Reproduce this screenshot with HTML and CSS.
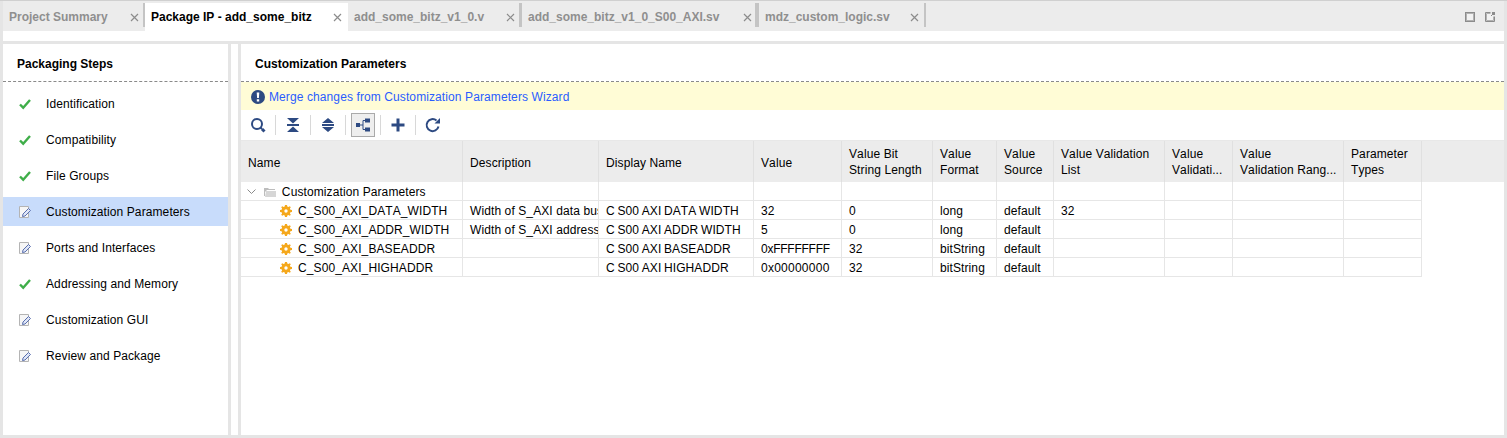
FILE: index.html
```html
<!DOCTYPE html>
<html lang="en">
<head>
  <meta charset="UTF-8">
  <title>Package IP - add_some_bitz</title>
  <link rel="stylesheet" href="styles.css">
</head>
<body>
  <!-- Tab bar -->
  <div class="tabbar">
    <div class="tab tab-first"><span class="tab-label">Project Summary</span><svg class="tab-x" viewBox="0 0 9 9"><path d="M1 1l7 7M8 1l-7 7"/></svg></div>
    <div class="tab tab-active"><span class="tab-label">Package IP - add_some_bitz</span><svg class="tab-x" viewBox="0 0 9 9"><path d="M1 1l7 7M8 1l-7 7"/></svg></div>
    <div class="tab tab-v"><span class="tab-label">add_some_bitz_v1_0.v</span><svg class="tab-x" viewBox="0 0 9 9"><path d="M1 1l7 7M8 1l-7 7"/></svg></div>
    <div class="tab tab-axi"><span class="tab-label">add_some_bitz_v1_0_S00_AXI.sv</span><svg class="tab-x" viewBox="0 0 9 9"><path d="M1 1l7 7M8 1l-7 7"/></svg></div>
    <div class="tab tab-mdz"><span class="tab-label">mdz_custom_logic.sv</span><svg class="tab-x" viewBox="0 0 9 9"><path d="M1 1l7 7M8 1l-7 7"/></svg></div>
    <div class="tab-tools">
      <svg class="win-icon" viewBox="0 0 10 10"><rect x="1.500" y="1.500" width="7" height="7" class="win-inner"/><rect x="0.500" y="0.500" width="9" height="9" class="win-outer"/></svg>
      <svg class="win-icon" viewBox="0 0 10 10"><path d="M5.500 1.500h-4v7h7V4.500" class="win-inner"/><path d="M5.500 .5h-5v9h9v-5" class="win-outer"/><path d="M7 0h3v3H7zM6 3h1v1H6z" class="win-arrow"/></svg>
    </div>
  </div>
  <div class="strip"></div>

  <div class="main">
    <!-- Packaging steps -->
    <div class="side">
      <div class="panel-title">Packaging Steps</div>
      <ul class="steps">
        <li class="step"><svg class="step-icon" viewBox="0 0 12 12"><path class="check" d="M1 6.500l3.200 3.200L11 2"/></svg>Identification</li>
        <li class="step"><svg class="step-icon" viewBox="0 0 12 12"><path class="check" d="M1 6.500l3.200 3.200L11 2"/></svg>Compatibility</li>
        <li class="step"><svg class="step-icon" viewBox="0 0 12 12"><path class="check" d="M1 6.500l3.200 3.200L11 2"/></svg>File Groups</li>
        <li class="step step-selected"><svg class="step-icon" viewBox="0 0 12 12"><path class="sheet" d="M.5 .5h9v11h-9z"/><path class="pen" d="M3.500 10.500l.5-2.500L9.500 2.500l2 2L6 10z"/></svg>Customization Parameters</li>
        <li class="step"><svg class="step-icon" viewBox="0 0 12 12"><path class="sheet" d="M.5 .5h9v11h-9z"/><path class="pen" d="M3.500 10.500l.5-2.500L9.500 2.500l2 2L6 10z"/></svg>Ports and Interfaces</li>
        <li class="step"><svg class="step-icon" viewBox="0 0 12 12"><path class="check" d="M1 6.500l3.200 3.200L11 2"/></svg>Addressing and Memory</li>
        <li class="step"><svg class="step-icon" viewBox="0 0 12 12"><path class="sheet" d="M.5 .5h9v11h-9z"/><path class="pen" d="M3.500 10.500l.5-2.500L9.500 2.500l2 2L6 10z"/></svg>Customization GUI</li>
        <li class="step"><svg class="step-icon" viewBox="0 0 12 12"><path class="sheet" d="M.5 .5h9v11h-9z"/><path class="pen" d="M3.500 10.500l.5-2.500L9.500 2.500l2 2L6 10z"/></svg>Review and Package</li>
      </ul>
    </div>
    <div class="splitter"></div>

    <!-- Parameters -->
    <div class="content">
      <div class="panel-title">Customization Parameters</div>
      <div class="notice">
        <svg class="notice-icon" viewBox="0 0 14 14"><circle cx="7" cy="7" r="7"/><path d="M5.700 2.500h2.600l-.4 5.500H6.100zM5.800 9.200h2.400v2.300H5.800z"/></svg>
        <a class="notice-link">Merge changes from Customization Parameters Wizard</a>
      </div>
      <div class="toolbar">
        <span class="tool"><svg viewBox="0 0 16 16"><circle class="tool-line" cx="7" cy="7" r="5"/><path class="tool-line" d="M10.500 10.500l1.500 1.500"/><path class="tool-plus" d="M12 12l2.500 2.500"/></svg></span>
        <i class="tool-sep"></i>
        <span class="tool"><svg viewBox="0 0 16 16"><path class="tool-fill" d="M2 1h12L8 6.500zM2 7h12v2H2zM2 15h12L8 9.500z"/></svg></span>
        <i class="tool-sep"></i>
        <span class="tool"><svg viewBox="0 0 16 16"><path class="tool-fill" d="M8 1l6 5H2zM2 7h12v2H2zM8 15l6-5H2z"/></svg></span>
        <i class="tool-sep"></i>
        <span class="tool tool-on"><svg viewBox="0 0 16 16"><path class="tool-thin" d="M5 8h3M8 3.500v9M8 3.500h3M8 12.500h3"/><rect class="tool-fill" x="1" y="6" width="4" height="4"/><rect class="tool-fill" x="10" y="1.500" width="5" height="4"/><rect class="tool-fill" x="10" y="10.500" width="5" height="4"/></svg></span>
        <i class="tool-sep"></i>
        <span class="tool"><svg viewBox="0 0 16 16"><path class="tool-plus" d="M8 1.500v13M1.500 8h13"/></svg></span>
        <i class="tool-sep"></i>
        <span class="tool"><svg viewBox="0 0 16 16"><path class="tool-line" d="M13.500 9.500A6 6 0 1 1 11.500 3.500"/><path class="tool-fill" d="M9.500 6.500h5.500V1z"/></svg></span>
      </div>

      <table class="params">
        <colgroup>
          <col class="c-name"><col class="c-desc"><col class="c-display"><col class="c-value"><col class="c-bits">
          <col class="c-format"><col class="c-source"><col class="c-list"><col class="c-valid"><col class="c-range"><col class="c-types"><col>
        </colgroup>
        <thead>
          <tr>
            <th class="th-one">Name</th><th class="th-one">Description</th><th class="th-one">Display Name</th><th class="th-one">Value</th><th>Value Bit<br>String Length</th>
            <th>Value<br>Format</th><th>Value<br>Source</th><th>Value Validation<br>List</th><th>Value<br>Validati...</th>
            <th>Value<br>Validation Rang...</th><th>Parameter<br>Types</th><th class="filler"></th>
          </tr>
        </thead>
        <tbody>
          <tr>
            <td class="group">
              <svg class="chev" viewBox="0 0 9 6"><path d="M.5 .5l4 4 4-4"/></svg>
              <svg class="folder" viewBox="0 0 12 10"><path d="M0 1h4l1 1h6v1H3L1 5v4H0z" class="folder-back"/><path d="M2 4h10v6H1z" class="folder-front"/></svg>
              Customization Parameters
            </td>
            <td></td><td></td><td></td><td></td><td></td><td></td><td></td><td></td><td></td><td></td><td class="filler"></td>
          </tr>
          <tr>
            <td class="param"><svg class="gear" viewBox="0 0 12 12"><path d="M5 0h2l.3 1.600 1.100.5L9.800 1.200l1 1-.9 1.400.5 1.100L12 5v2l-1.600.3-.5 1.100.9 1.400-1 1-1.400-.9-1.100.5L7 12H5l-.3-1.600-1.100-.5-1.400.9-1-1 .9-1.400-.5-1.100L0 7V5l1.600-.3.5-1.100-.9-1.400 1-1 1.400.9 1.100-.5zM6 4.300a1.700 1.700 0 1 0 0 3.400 1.700 1.700 0 0 0 0-3.400z"/></svg>C_S00_AXI_DATA_WIDTH</td>
            <td>Width of S_AXI data bus</td><td class="display">C S00 AXI DATA WIDTH</td><td>32</td><td>0</td><td>long</td><td>default</td><td>32</td><td></td><td></td><td></td><td class="filler"></td>
          </tr>
          <tr>
            <td class="param"><svg class="gear" viewBox="0 0 12 12"><path d="M5 0h2l.3 1.600 1.100.5L9.800 1.200l1 1-.9 1.400.5 1.100L12 5v2l-1.600.3-.5 1.100.9 1.400-1 1-1.400-.9-1.100.5L7 12H5l-.3-1.600-1.100-.5-1.400.9-1-1 .9-1.400-.5-1.100L0 7V5l1.600-.3.5-1.100-.9-1.400 1-1 1.400.9 1.100-.5zM6 4.300a1.700 1.700 0 1 0 0 3.400 1.700 1.700 0 0 0 0-3.400z"/></svg>C_S00_AXI_ADDR_WIDTH</td>
            <td>Width of S_AXI address bus</td><td class="display">C S00 AXI ADDR WIDTH</td><td>5</td><td>0</td><td>long</td><td>default</td><td></td><td></td><td></td><td></td><td class="filler"></td>
          </tr>
          <tr>
            <td class="param"><svg class="gear" viewBox="0 0 12 12"><path d="M5 0h2l.3 1.600 1.100.5L9.800 1.200l1 1-.9 1.400.5 1.100L12 5v2l-1.600.3-.5 1.100.9 1.400-1 1-1.400-.9-1.100.5L7 12H5l-.3-1.600-1.100-.5-1.400.9-1-1 .9-1.400-.5-1.100L0 7V5l1.600-.3.5-1.100-.9-1.400 1-1 1.400.9 1.100-.5zM6 4.300a1.700 1.700 0 1 0 0 3.400 1.700 1.700 0 0 0 0-3.400z"/></svg>C_S00_AXI_BASEADDR</td>
            <td></td><td class="display">C S00 AXI BASEADDR</td><td class="hex-f">0xFFFFFFFF</td><td>32</td><td>bitString</td><td>default</td><td></td><td></td><td></td><td></td><td class="filler"></td>
          </tr>
          <tr>
            <td class="param"><svg class="gear" viewBox="0 0 12 12"><path d="M5 0h2l.3 1.600 1.100.5L9.800 1.200l1 1-.9 1.400.5 1.100L12 5v2l-1.600.3-.5 1.100.9 1.400-1 1-1.400-.9-1.100.5L7 12H5l-.3-1.600-1.100-.5-1.400.9-1-1 .9-1.400-.5-1.100L0 7V5l1.600-.3.5-1.100-.9-1.400 1-1 1.400.9 1.100-.5zM6 4.300a1.700 1.700 0 1 0 0 3.400 1.700 1.700 0 0 0 0-3.400z"/></svg>C_S00_AXI_HIGHADDR</td>
            <td></td><td class="display">C S00 AXI HIGHADDR</td><td class="hex-0">0x00000000</td><td>32</td><td>bitString</td><td>default</td><td></td><td></td><td></td><td></td><td class="filler"></td>
          </tr>
        </tbody>
      </table>
    </div>
  </div>
</body>
</html>
```

FILE: styles.css
```css
html, body {
  margin: 0;
  height: 100%;
}
body {
  display: flex;
  flex-direction: column;
  height: 438px;
  overflow: hidden;
  font-family: "Liberation Sans", Arial, sans-serif;
  font-size: 12px;
  font-kerning: none;
  letter-spacing: 0.1px;
  color: #000;
  background: #e5e5e5;
  box-sizing: border-box;
  border-top: 1px solid #d0d0d0;
  padding: 0 3px 3px;
}

/* tab bar */
.tabbar {
  display: flex;
  height: 30px;
  padding-top: 2px;
  box-sizing: border-box;
  background: #ececec;
  flex: none;
}
.tab {
  display: flex;
  align-items: center;
  box-sizing: border-box;
  height: 28px;
  padding: 0 7px 0 6px;
  font-weight: bold;
  letter-spacing: 0;
  color: #8f8f8f;
  background: linear-gradient(#c4c4c4, #c4c4c4) right top / 3px 24px no-repeat;
}
.tab-label {
  flex: 1;
}
.tab-first {
  width: 142px;
  padding-right: 6px;
  background-size: 2px 24px;
}
.tab-active {
  width: 203px;
  padding-right: 6px;
  background: #fff;
  color: #000;
}
.tab-v { width: 174px; }
.tab-axi { width: 237px; background-size: 4px 24px; }
.tab-mdz { width: 167px; background-size: 2px 24px; }
.tab-x {
  width: 9px;
  height: 9px;
  margin-top: 1px;
  fill: none;
  stroke: #8c8c8c;
  stroke-width: 1.200;
}
.tab-tools {
  display: flex;
  gap: 10px;
  align-items: center;
  margin-left: auto;
  padding: 0 9px 0 0;
}
.win-icon {
  width: 10px;
  height: 10px;
  fill: none;
}
.win-inner { stroke: #b2b2b2; fill: #f2f2f2; }
.win-outer { stroke: #8c8c8c; fill: none; }
.win-arrow { fill: #8c8c8c; }

.strip {
  height: 10px;
  flex: none;
  background: #fff;
}

/* panels */
.main {
  display: flex;
  gap: 3px;
  flex: 1;
  min-height: 0;
  padding-top: 3px;
}
.side {
  width: 225px;
  background: #fff;
  flex: none;
}
.splitter {
  width: 7px;
  flex: none;
  background: #fff;
}
.content {
  flex: 1;
  min-width: 0;
  background: #fff;
}
.panel-title {
  height: 38px;
  box-sizing: border-box;
  padding: 13px 14px 0;
  font-weight: bold;
  letter-spacing: 0;
  border-bottom: 1px dashed #8a8a8a;
}

.steps {
  list-style: none;
  margin: 0;
  padding: 7px 0 0;
}
.step {
  display: flex;
  align-items: center;
  height: 29px;
  margin-bottom: 7px;
  padding-left: 16px;
}
.step-selected { background: #c8dcfb; }
.step-icon {
  width: 12px;
  height: 12px;
  margin-right: 15px;
  flex: none;
}
.check {
  fill: none;
  stroke: #3fae49;
  stroke-width: 2.400;
}
.sheet { fill: #f6f6f6; stroke: #b4b4b4; }
.pen { fill: #dfe6f7; stroke: #5a6fae; }

/* notice */
.notice {
  display: flex;
  align-items: center;
  height: 28px;
  padding: 1px 0 0 10px;
  box-sizing: border-box;
  background: #fffcd6;
}
.notice-icon {
  width: 14px;
  height: 14px;
  margin-right: 4px;
}
.notice-icon circle { fill: #2d4a82; }
.notice-icon path { fill: #fff; }
.notice-link { color: #2a5cff; }

/* toolbar */
.toolbar {
  display: flex;
  align-items: center;
  height: 31px;
  box-sizing: border-box;
  border-bottom: 1px solid #e8e8e8;
}
.tool {
  display: flex;
  justify-content: center;
  align-items: center;
  width: 34px;
  height: 24px;
}
.tool svg { width: 16px; height: 16px; }
.tool-sep {
  width: 1px;
  height: 20px;
  background: #d8d8d8;
}
.tool-on {
  box-sizing: border-box;
  width: 24px;
  background: #eee;
  border: 1px solid #aaa;
  margin: 0 5px;
}
.tool-line { fill: none; stroke: #2d4a82; stroke-width: 2; }
.tool-plus { fill: none; stroke: #2d4a82; stroke-width: 3; }
.tool-thin { fill: none; stroke: #2d4a82; stroke-width: 1; }
.tool-fill { fill: #2d4a82; }

/* table */
.params {
  border-collapse: separate;
  border-spacing: 0;
  table-layout: fixed;
  width: 100%;
}
.c-name { width: 222px; }
.c-desc { width: 136px; }
.c-display { width: 155px; }
.c-value { width: 88px; }
.c-bits { width: 91px; }
.c-format { width: 64px; }
.c-source { width: 57px; }
.c-list { width: 111px; }
.c-valid { width: 68px; }
.c-range { width: 111px; }
.c-types { width: 78px; }
.params th {
  height: 41px;
  box-sizing: border-box;
  padding: 5px 7px 0;
  vertical-align: top;
  text-align: left;
  font-weight: normal;
  line-height: 16px;
  background: #ececec;
  border-right: 1px solid #e0e0e0;
  white-space: nowrap;
  overflow: hidden;
}
.params th.th-one { padding-top: 14px; }
.params td {
  height: 19px;
  box-sizing: border-box;
  padding: 2px 7px 0;
  line-height: 16px;
  border-right: 1px solid #e6e6e6;
  border-bottom: 1px solid #e6e6e6;
  white-space: nowrap;
  overflow: hidden;
}
.params td.filler { border: 0; }
.params th.filler { border-right: 0; }
.params td.group { padding-left: 6px; }
.params td.param { padding-left: 39px; }
.params td.display { word-spacing: -0.8px; }
.params td.hex-f { letter-spacing: -0.25px; }
.params td.hex-0 { letter-spacing: 0.25px; }
.chev {
  width: 9px;
  height: 6px;
  fill: none;
  stroke: #8a8a8a;
  margin-right: 5px;
  vertical-align: 1px;
}
.folder {
  width: 12px;
  height: 10px;
  margin-right: 2px;
  vertical-align: -1px;
}
.folder-back { fill: #bdbdbd; }
.folder-front { fill: #d6d6d6; }
.gear {
  width: 12px;
  height: 12px;
  margin-right: 6px;
  vertical-align: -2px;
  fill: #f5a81c;
  fill-rule: evenodd;
}
```
